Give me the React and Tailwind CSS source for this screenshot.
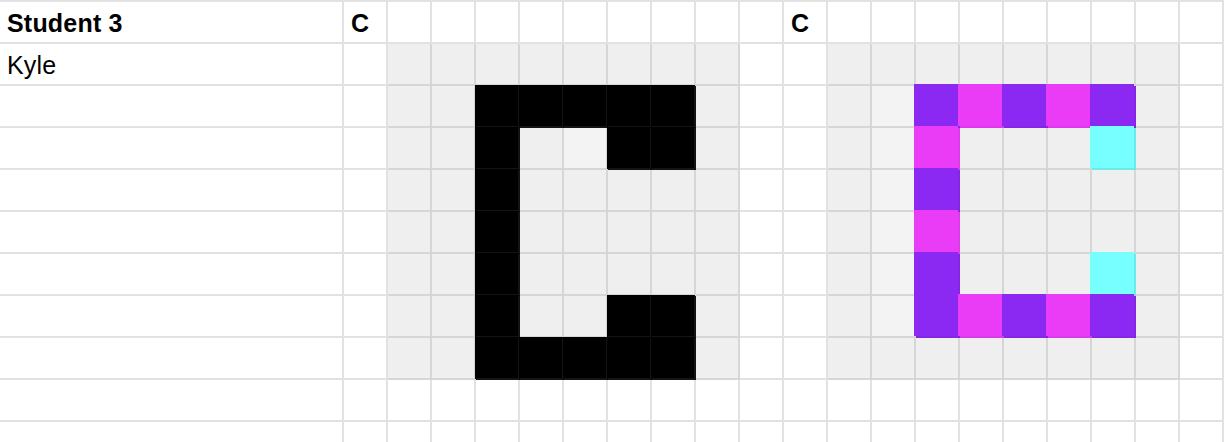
import React from 'react';

// cell fill -> classes (bg + gridline colour)
const FILL = {
  white: 'bg-white border-[#e2e2e2]',
  gray: 'bg-[#efefef] border-[#d6d6d6]',
  light: 'bg-[#f3f3f3] border-[#d6d6d6]',
  black: 'bg-black border-[#141414] shadow-[-1px_-1px_0_0_#000]',
  purple: 'bg-[#8b29f2] border-[#8426e6] shadow-[-2px_-2px_0_0_#8b29f2]',
  pink: 'bg-[#ea3cf6] border-[#de39ea] shadow-[-2px_-2px_0_0_#ea3cf6]',
  cyan: 'bg-[#77fefe] border-[#6aeaea] shadow-[-2px_-2px_0_0_#77fefe]',
};

const ROWS = 11;
const COLS = 21;

function fillFor(r, c) {
  // first letter, black on gray
  if (c >= 2 && c <= 9 && r >= 1 && r <= 8) {
    if (c >= 4 && c <= 8 && r >= 2) {
      if (r === 2 || r === 8) return 'black';
      if (c === 4) return 'black';
      if ((r === 3 || r === 7) && (c === 7 || c === 8)) return 'black';
    }
    if (r === 3 && c === 6) return 'light';
    return 'gray';
  }
  // second letter, coloured
  if (c >= 12 && c <= 19 && r >= 1 && r <= 8) {
    if (c >= 14 && c <= 18 && r >= 2 && r <= 7) {
      if (r === 2 || r === 7) return c % 2 === 0 ? 'purple' : 'pink';
      if (c === 14) return r % 2 === 0 ? 'purple' : 'pink';
      if (c === 18 && (r === 3 || r === 6)) return 'cyan';
    }
    if (c === 13 && r >= 2 && r <= 7) return 'light';
    return 'gray';
  }
  return 'white';
}

const TEXT = {
  '0-0': { t: 'Student 3', bold: true },
  '0-1': { t: 'C', bold: true },
  '0-11': { t: 'C', bold: true },
  '1-0': { t: 'Kyle', bold: false },
};

export default function App() {
  const cells = [];
  for (let r = 0; r < ROWS; r++) {
    for (let c = 0; c < COLS; c++) {
      const txt = TEXT[`${r}-${c}`];
      cells.push(
        <div
          key={`${r}-${c}`}
          className={`h-[42px] border-r-2 border-b-2 flex items-center px-[7px] pt-[2px] overflow-hidden whitespace-nowrap ${FILL[fillFor(r, c)]}`}
        >
          {txt && (
            <span className={`text-[25px] leading-none tracking-[0.2px] text-black ${txt.bold ? 'font-bold' : 'font-normal'}`}>
              {txt.t}
            </span>
          )}
        </div>
      );
    }
  }

  return (
    <div className="w-[1224px] h-[442px] overflow-hidden bg-white font-['Liberation_Sans',Arial,sans-serif]">
      <div className="grid grid-cols-[344px_repeat(20,44px)] border-t-2 border-[#e2e2e2]">
        {cells}
      </div>
    </div>
  );
}
